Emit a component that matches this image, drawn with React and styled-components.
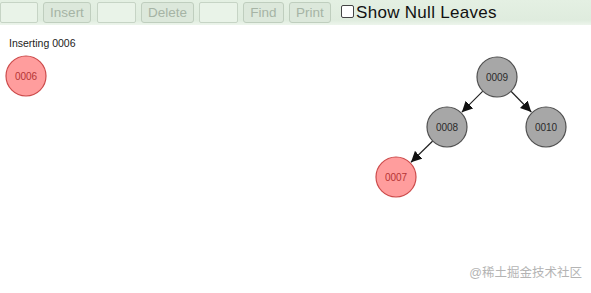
import styled, { createGlobalStyle } from 'styled-components'

const GlobalStyle = createGlobalStyle`
  html, body {
    margin: 0;
    padding: 0;
    background: #ffffff;
  }

  body {
    font-family: 'Liberation Sans', Arial, sans-serif;
    width: 591px;
    height: 293px;
    overflow: hidden;
  }
`

const Page = styled('main')`
  position: relative;
  width: 591px;
  height: 293px;
  overflow: hidden;
`

const Toolbar = styled('div')`
  height: 25px;
  display: flex;
  align-items: center;
  gap: 5px;
  background: linear-gradient(180deg, #e4f0e3 0%, #dfecde 80%, #edf5ec 100%);
  box-sizing: border-box;
`

const Field = styled('input')`
  width: ${(p) => p.$width || 40}px;
  height: 21px;
  box-sizing: border-box;
  margin: 0 0 0 ${(p) => p.$offset || 0}px;
  border: 1px solid #c6d4c5;
  border-radius: 2px;
  background: #e9f3e8;
  outline: none;
`

const Button = styled('button')`
  width: ${(p) => p.$width}px;
  height: 21px;
  box-sizing: border-box;
  margin: 0 0 0 ${(p) => p.$offset || 0}px;
  padding: 0;
  border: 1px solid #bfcebe;
  border-radius: 3px;
  background: #dce8db;
  color: #a6b4a5;
  font-family: 'Liberation Sans', Arial, sans-serif;
  font-size: 13.5px;
  line-height: 19px;
`

const Toggle = styled('label')`
  display: flex;
  align-items: center;
  gap: 2px;
  margin-left: 5px;
  font-size: 17px;
  letter-spacing: 0.3px;
  color: #111;
  line-height: 20px;
`

const Box = styled('span')`
  width: 11px;
  height: 11px;
  border: 1px solid #444;
  border-radius: 2px;
  background: #fff;
  margin-top: -2px;
`

const Canvas = styled('section')`
  position: relative;
  height: 268px;
`

const Drawing = styled('svg')`
  position: absolute;
  inset: 0;
`

const Status = styled('div')`
  position: relative;
  padding: 12px 0 0 9px;
  font-size: 10.5px;
  color: #222;
`

const Watermark = styled('div')`
  position: absolute;
  right: 9px;
  bottom: 12px;
  font-family: 'Liberation Sans', 'Noto Sans CJK SC', sans-serif;
  font-size: 12.5px;
  color: #b4b4b4;
`

const nodes = [
  { id: '0006', x: 26, y: 51, red: true },
  { id: '0009', x: 497, y: 52 },
  { id: '0008', x: 447, y: 102 },
  { id: '0010', x: 546, y: 102 },
  { id: '0007', x: 396, y: 152, red: true },
]

const edges = [
  ['0009', '0008'],
  ['0009', '0010'],
  ['0008', '0007'],
]

const R = 20

const edgeLine = (a, b) => {
  const dx = b.x - a.x
  const dy = b.y - a.y
  const len = Math.hypot(dx, dy)
  const ux = dx / len
  const uy = dy / len
  return {
    x1: a.x + ux * R,
    y1: a.y + uy * R,
    x2: b.x - ux * (R + 1),
    y2: b.y - uy * (R + 1),
  }
}

const Tree = () => {
  const byId = Object.fromEntries(nodes.map((n) => [n.id, n]))
  return (
    <Drawing width='591' height='268' viewBox='0 0 591 268'>
      <defs>
        <marker id='arrow' viewBox='0 0 10 10' refX='10' refY='5' markerWidth='9' markerHeight='9' orient='auto'>
          <path d='M0 0 L10 5 L0 10 Z' fill='#111' />
        </marker>
      </defs>
      {edges.map(([p, c]) => {
        const l = edgeLine(byId[p], byId[c])
        return <line key={p + c} {...l} stroke='#222' strokeWidth='1.2' markerEnd='url(#arrow)' />
      })}
      {nodes.map((n) => (
        <g key={n.id}>
          <circle
            cx={n.x}
            cy={n.y}
            r={R}
            fill={n.red ? '#ff9d9d' : '#a7a7a7'}
            stroke={n.red ? '#cc4b4b' : '#505050'}
            strokeWidth='1.2'
          />
          <text
            x={n.x}
            y={n.y + 3.5}
            textAnchor='middle'
            fontFamily="'Liberation Sans', Arial, sans-serif"
            fontSize='10'
            fill={n.red ? '#b53434' : '#2a2a2a'}
          >
            {n.id}
          </text>
        </g>
      ))}
    </Drawing>
  )
}

const App = function App() {
  return (
    <Page>
      <GlobalStyle />
      <Toolbar>
        <Field $width={38} />
        <Button $width={48}>Insert</Button>
        <Field $width={39} $offset={1} />
        <Button $width={53}>Delete</Button>
        <Field $width={39} />
        <Button $width={41}>Find</Button>
        <Button $width={42}>Print</Button>
        <Toggle>
          <Box />
          Show Null Leaves
        </Toggle>
      </Toolbar>
      <Canvas>
        <Tree />
        <Status>Inserting 0006</Status>
      </Canvas>
      <Watermark>@稀土掘金技术社区</Watermark>
    </Page>
  )
}

export default App
